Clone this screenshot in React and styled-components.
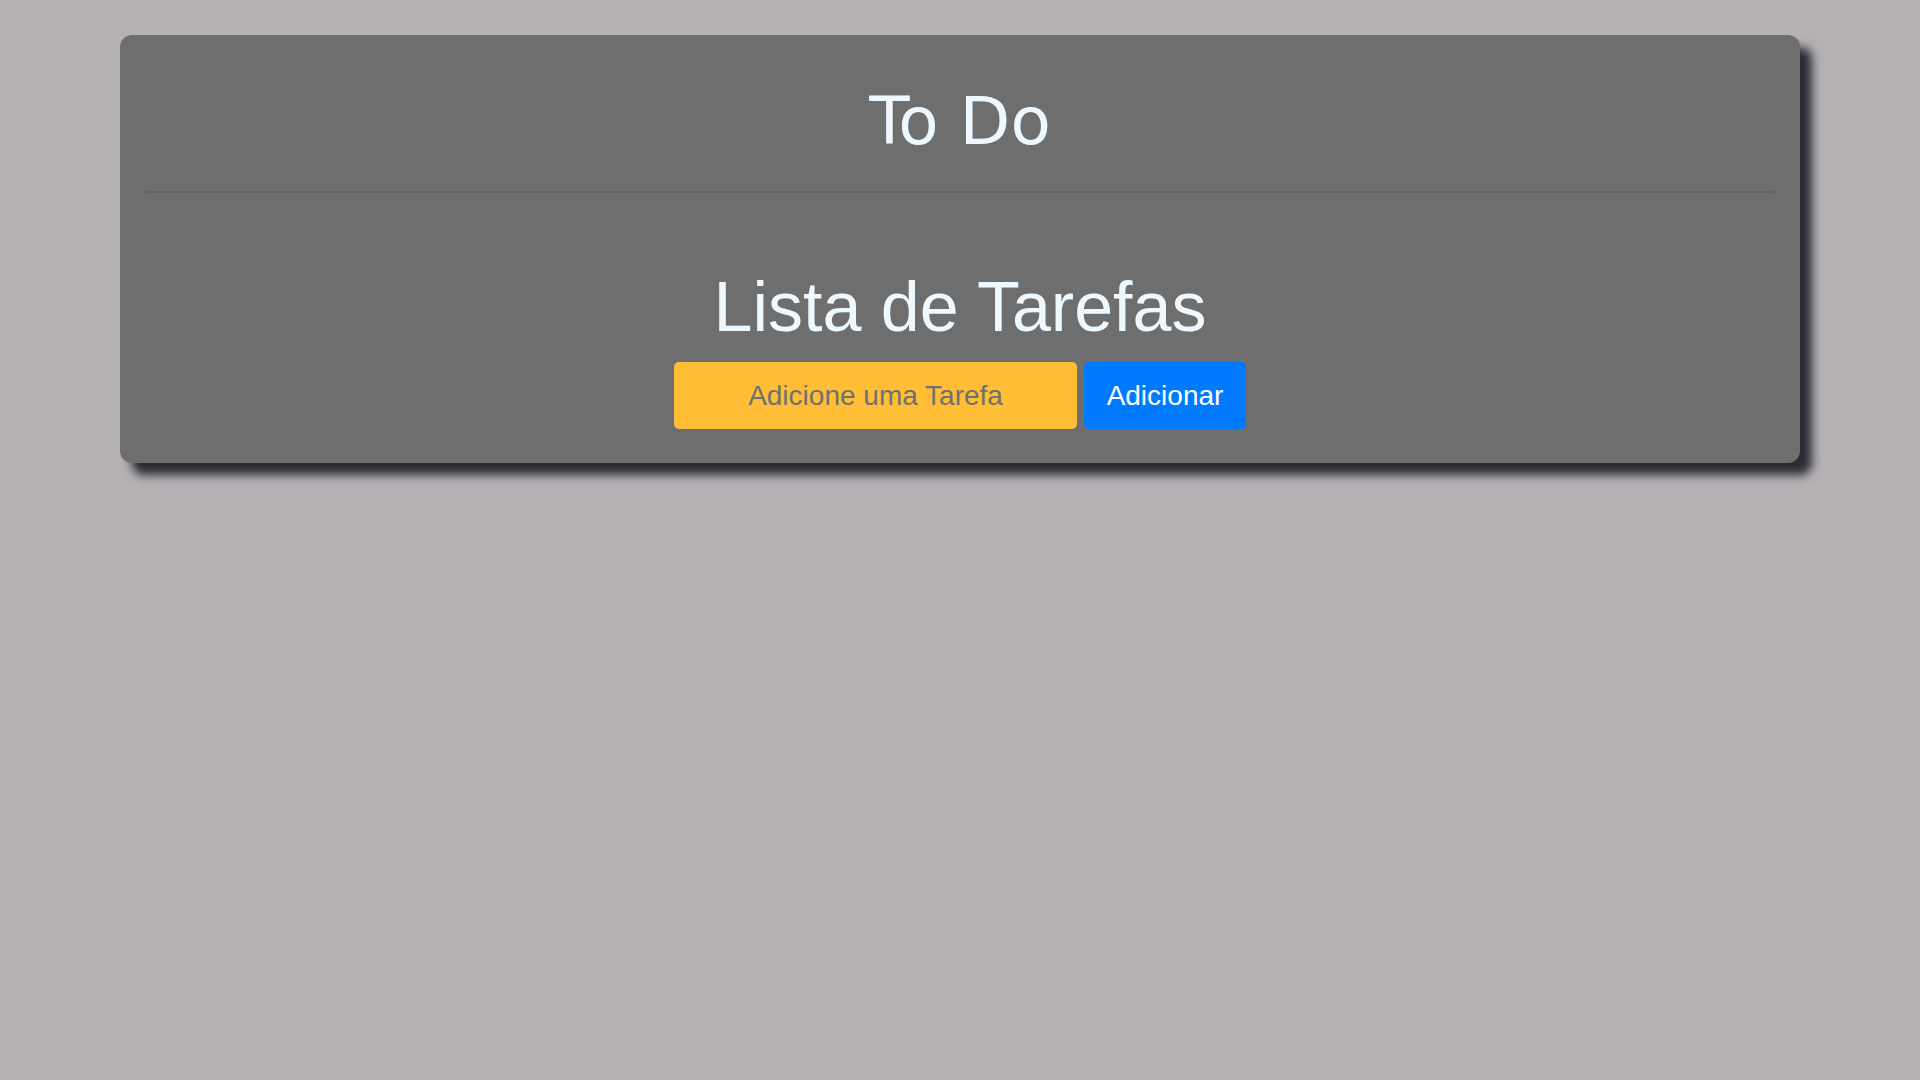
import React from "react";
import styled, { createGlobalStyle } from "styled-components";

const Global = createGlobalStyle`
  html, body {
    margin: 0;
    padding: 0;
    background: #b4b0b4;
    font-family: "Liberation Sans", Arial, sans-serif;
  }
  #root {
    min-height: 100vh;
    padding-top: 35px;
    box-sizing: border-box;
  }
`;

const Card = styled.div`
  margin: 0 120px;
  background: #6e6e6e;
  border-radius: 12px;
  box-shadow: 12px 12px 10px #2a2d34;
  padding: 0 26px 34px;
`;

const Header = styled.header`
  padding-top: 47px;
  padding-bottom: 29px;
  border-bottom: 2px solid #636363;
`;

const AppTitle = styled.h1`
  margin: 0;
  text-align: center;
  font-family: "DejaVu Sans", Verdana, sans-serif;
  font-weight: 400;
  font-size: 66px;
  line-height: 80px;
  color: #f0f8ff;
`;

const Section = styled.section`
  padding-top: 74px;
  display: flex;
  flex-direction: column;
  align-items: center;
  gap: 15px;
`;

const ListTitle = styled.h2`
  margin: 0;
  font-family: "Liberation Sans", Arial, sans-serif;
  font-weight: 400;
  font-size: 70px;
  line-height: 80px;
  color: #f0f8ff;
`;

const Form = styled.form`
  display: flex;
  gap: 7px;
`;

const Input = styled.input`
  width: 403px;
  height: 67px;
  box-sizing: border-box;
  border: none;
  border-radius: 5px;
  background: #ffbe35;
  font-family: "Liberation Sans", Arial, sans-serif;
  font-size: 28px;
  text-align: center;
  color: #333;
  outline: none;
  &::placeholder {
    color: #707070;
  }
`;

const Button = styled.button`
  width: 162px;
  height: 67px;
  padding: 0;
  border: none;
  border-radius: 5px;
  background: #007bff;
  color: #ffffff;
  font-family: "Liberation Sans", Arial, sans-serif;
  font-size: 28px;
  cursor: pointer;
`;

export default function App() {
  return (
    <>
      <Global />
      <Card>
        <Header>
          <AppTitle>To Do</AppTitle>
        </Header>
        <Section>
          <ListTitle>Lista de Tarefas</ListTitle>
          <Form onSubmit={(e) => e.preventDefault()}>
            <Input placeholder="Adicione uma Tarefa" />
            <Button type="submit">Adicionar</Button>
          </Form>
        </Section>
      </Card>
    </>
  );
}
